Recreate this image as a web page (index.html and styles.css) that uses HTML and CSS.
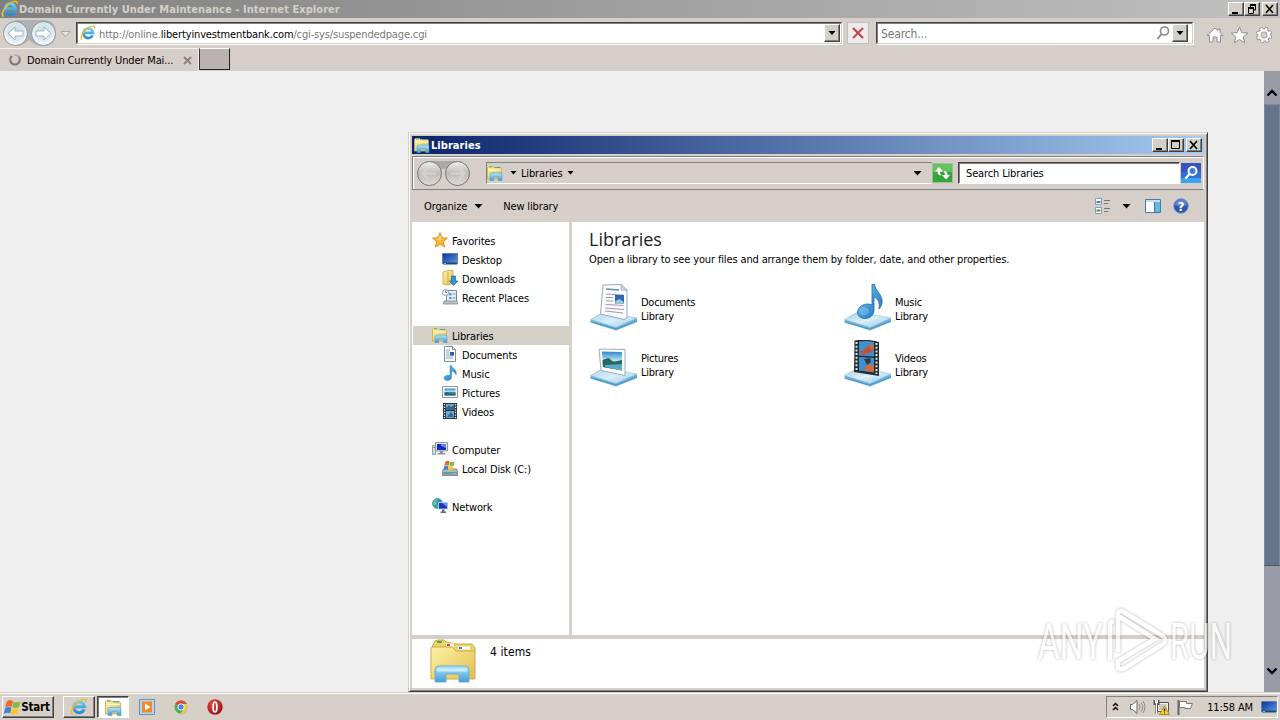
FILE: index.html
```
<!DOCTYPE html>
<html lang="en">
<head>
    <meta charset="UTF-8">
    <meta name="viewport" content="width=device-width, initial-scale=1.0">
    <title>Domain Currently Under Maintenance</title>
    <link rel="stylesheet" href="styles.css">
</head>
<body>

    <!-- shared icons -->
    <svg class="defs">
        <defs>
            <linearGradient id="gFolder" x1="0" y1="0" x2="1" y2="1"><stop offset="0" stop-color="#fdf3a8"/><stop offset="1" stop-color="#e3bd4f"/></linearGradient>
            <linearGradient id="gBlue" x1="0" y1="0" x2="0" y2="1"><stop offset="0" stop-color="#b5e5fb"/><stop offset="1" stop-color="#3d9bd6"/></linearGradient>
            <linearGradient id="gNote" x1="0" y1="0" x2="1" y2="1"><stop offset="0" stop-color="#7cc6f2"/><stop offset="1" stop-color="#1673bd"/></linearGradient>
            <linearGradient id="gScreen" x1="0" y1="0" x2="1" y2="1"><stop offset="0" stop-color="#0a2f94"/><stop offset="1" stop-color="#5b9be6"/></linearGradient>
            <linearGradient id="gPhoto" x1="0" y1="0" x2="0" y2="1"><stop offset="0" stop-color="#2d86cf"/><stop offset=".5" stop-color="#c3e7f2"/><stop offset=".55" stop-color="#4d8b6e"/><stop offset="1" stop-color="#2d7e9b"/></linearGradient>
            <linearGradient id="gPlate" x1="0" y1="0" x2="1" y2="1"><stop offset="0" stop-color="#a9d2e8"/><stop offset=".5" stop-color="#d9eef8"/><stop offset="1" stop-color="#9ccbe5"/></linearGradient>
            <linearGradient id="gIe" x1="0" y1="0" x2="0" y2="1"><stop offset="0" stop-color="#6ccdf5"/><stop offset="1" stop-color="#2b8bd0"/></linearGradient>
            <radialGradient id="gNavBlue" cx=".5" cy=".4" r=".6"><stop offset="0" stop-color="#c9dbe6"/><stop offset=".6" stop-color="#dce7ee"/><stop offset="1" stop-color="#fff"/></radialGradient>
            <linearGradient id="gNavGray" x1="0" y1="0" x2="0" y2="1"><stop offset="0" stop-color="#efefed"/><stop offset=".5" stop-color="#bcbbb8"/><stop offset="1" stop-color="#deddda"/></linearGradient>
            <radialGradient id="gOpera" cx=".4" cy=".3" r=".8"><stop offset="0" stop-color="#ec5048"/><stop offset="1" stop-color="#8f060c"/></radialGradient>
        </defs>

        <symbol id="ie" viewBox="0 0 16 16">
            <path d="M12.6 10.2A4.8 4.8 0 1 1 13 7.8H4.5" fill="none" stroke="url(#gIe)" stroke-width="2.7"/>
            <path d="M2.3 14.7C-.7 13.3 2.5 6.5 8 3c4-2.5 7.3-2.5 6.4.7" fill="none" stroke="#e9bd23" stroke-width="1.3"/>
        </symbol>
        <symbol id="lib" viewBox="0 0 16 16">
            <path d="M.5 14V2.5l1-1h4l1 1h7l1 1V14z" fill="url(#gFolder)" stroke="#cda84b" stroke-width=".8"/>
            <path d="M8 2.5h5" stroke="#4c9fb8"/><path d="M2 2h3" stroke="#62b254"/>
            <path d="M1 5h13" stroke="#fffbd5"/>
            <path d="M3 15.5V9.500q0-1.500 1.500-1.500h8.500q2 0 2 1.500v6h-3.500V12H6.500v3.500z" fill="url(#gBlue)" stroke="#4a9cd0" stroke-width=".6"/>
        </symbol>
        <symbol id="star" viewBox="0 0 16 16">
            <path d="M8 .8l2 5 5.400.400-4.100 3.500 1.400 5.300L8 12.100 3.300 15l1.400-5.300L.6 6.200 6 5.800z" fill="#fdb731" stroke="#d58519" stroke-width=".9"/>
            <path d="M8 3l1.300 3.500L8 9 4 7l2.700-.3z" fill="#ffe287"/>
        </symbol>
        <symbol id="desktop" viewBox="0 0 16 16">
            <path d="M.5 2.500h15v10H.5z" fill="url(#gScreen)" stroke="#5f82ad"/>
            <path d="M1 12.500h14" stroke="#23477d" stroke-width="2"/><path d="M2 12.500h2" stroke="#7ec1ef"/>
        </symbol>
        <symbol id="downloads" viewBox="0 0 16 16">
            <path d="M1 2l5-1.500h5v13L6 15l-5-1z" fill="url(#gFolder)" stroke="#cba343" stroke-width=".8"/>
            <path d="M6 2v13" stroke="#d8b44e"/>
            <path d="M9.500 6h4v5H16l-4.500 4.500L7.500 11h2z" fill="#3394dc" stroke="#1764a6" stroke-width=".7"/>
        </symbol>
        <symbol id="recent" viewBox="0 0 16 16">
            <path d="M4.500 1.500h10v11h-10z" fill="#e4effa" stroke="#6f87a2"/>
            <path d="M7 4h2.500v2.500H7zM7 8h2.500v2H7z" fill="#6c91bf"/><path d="M10.500 5h3M10.500 9h3" stroke="#6c91bf"/>
            <path d="M2 12h13l.5 3H1.500z" fill="#bcc3c9" stroke="#7d868d" stroke-width=".8"/>
            <circle cx="3.500" cy="3.500" r="3" fill="#fff" stroke="#8c949b"/><path d="M3.500 1.500v2h1.500" fill="none" stroke="#555" stroke-width=".8"/>
        </symbol>
        <symbol id="doc" viewBox="0 0 16 16">
            <path d="M2.500.5h8l3 3v12h-11z" fill="#fdfeff" stroke="#7c8c9c"/>
            <path d="M10.500.5v3h3" fill="#d5e0ea" stroke="#7c8c9c"/>
            <path d="M4 4h4M4 6h3M4 8h3M4 10h7M4 12h7" stroke="#8fa5bb"/><path d="M8 6h4v3.500H8z" fill="#275fa5"/>
        </symbol>
        <symbol id="music" viewBox="0 0 16 16">
            <path d="M8 .5h1.500C10 3.500 15.500 4.500 14 10 13.500 8 12 6.500 9.500 6v6c0 2-1.500 3.500-4 3.500-2.200 0-3.500-1-3.500-2.500C2 10.800 5 9.500 8 10.500z" fill="url(#gNote)" stroke="#2f87c6" stroke-width=".5"/>
        </symbol>
        <symbol id="pic" viewBox="0 0 16 16">
            <path d="M.5 2.500h15v11H.5z" fill="#fff" stroke="#8a979f"/><path d="M2.500 4.500h11v7h-11z" fill="url(#gPhoto)"/>
            <path d="M2.500 8.500q3-1 6 1t5-1v3h-11z" fill="#236e80"/>
        </symbol>
        <symbol id="video" viewBox="0 0 16 16">
            <path d="M1 0h14v16H1z" fill="#27333c"/><path d="M4 1h8v6H4zM4 8h8v7H4z" fill="#64aadb"/>
            <path d="M4 5l3-3 2 2 3-2v5H4zM5 14l4-5 3 5z" fill="#3d6684"/>
            <path d="M2.500 1v14M13.500 1v14" stroke="#e8eef1" stroke-width="1.300" stroke-dasharray="1.300 1.300"/>
        </symbol>
        <symbol id="computer" viewBox="0 0 16 16">
            <path d="M.5 4.500h3v9h-3z" fill="#d9dbd7" stroke="#888e91" stroke-width=".8"/><path d="M1 6.500h2" stroke="#64ae52"/>
            <path d="M3.500 1.500h12v8.500h-12z" fill="#dce4ee" stroke="#8b98ac"/>
            <path d="M5 3h9v6H5z" fill="#1729bc"/><path d="M9 3h5v4L9 5z" fill="#6482ec"/>
            <path d="M8 10h3v2h2.500v1.500h-8V12H8z" fill="#8594a5"/>
        </symbol>
        <symbol id="winflag" viewBox="0 0 16 16">
            <path d="M2.500 2.500q3-2.500 6-.5L7.200 7.500Q4.500 6 1.200 8z" fill="#ee642d"/><path d="M9 2.500q3 1.500 6.700-.5l-1.500 5.500q-3 1.500-6.200.3z" fill="#7ebb42"/>
            <path d="M1 8.700q3-2 6-.5L5.800 13.500Q3 12 0 14z" fill="#3d83d4"/><path d="M7.700 8.500q3 1.200 6.200 0l-1.500 5.500q-3 1.300-6 0z" fill="#f8c72d"/>
        </symbol>
        <symbol id="disk" viewBox="0 0 16 16">
            <path d="M1.500 9h13l1.500 3v3.500H0V12z" fill="#aab8bf" stroke="#67767f" stroke-width=".8"/><path d="M1 12h14v2.500H1z" fill="#6c97a8"/><path d="M11 13.500h3" stroke="#69ea72"/>
            <use href="#winflag" x="1.500" y="0" width="11.500" height="11.500"/>
        </symbol>
        <symbol id="network" viewBox="0 0 16 16">
            <circle cx="5.500" cy="5.500" r="5" fill="#2b96cf" stroke="#277baf" stroke-width=".6"/>
            <path d="M1 5q2-4 5-4L4 4l1 2-3 2zM5 7l3 1-2 2z" fill="#7ac66d"/>
            <path d="M6.500 4.500h9V11h-9z" fill="#1736bf" stroke="#b5c5d7"/><path d="M10 5h5v4z" fill="#6b8eee"/>
            <path d="M10 11.500h2.500v2H14V15H8.500v-1.500H10z" fill="#60718a"/>
        </symbol>
        <symbol id="plate" viewBox="0 0 48 48">
            <path d="M.5 37L13 29.500l34 6V39L26 47.500.5 39.500z" fill="#6bb0d8"/>
            <path d="M.5 36.500L14 29l33 6-21 9.500z" fill="url(#gPlate)" stroke="#8bc0dc" stroke-width=".6"/>
            <path d="M1 39l25 7 21-8" fill="none" stroke="#428fbd" stroke-width=".8"/>
        </symbol>
    </svg>

    <div class="browser">
        <div class="ie-title">
            <svg width="18" height="18"><use href="#ie"/></svg>
            <span class="ie-title-text">Domain Currently Under Maintenance - Internet Explorer</span>
            <div class="win-btns">
                <i><svg width="14" height="12"><path d="M3 9h6v2H3z"/></svg></i>
                <i><svg width="14" height="12"><path d="M5 1h6v2H5zM3 4h6v2H3z"/><path d="M5.500 2v2M10.500 2v5H9M3.500 5v5.500h5V5" fill="none" stroke="#000"/></svg></i>
                <i class="close"><svg width="14" height="12"><path d="M3 2l7 8M10 2l-7 8" stroke="#000" stroke-width="1.600"/></svg></i>
            </div>
        </div>

        <div class="ie-nav">
            <svg class="ie-arrows" width="74" height="30" viewBox="0 0 74 30">
                <path d="M15 2h28q13 0 13 13T43 28q-8 0-14-6-6 6-14 6z" fill="#b3b2b2"/>
                <circle cx="15.500" cy="15.500" r="12" fill="url(#gNavBlue)" stroke="#8795a0"/>
                <circle cx="43.500" cy="15.500" r="12" fill="url(#gNavBlue)" stroke="#8795a0"/>
                <path d="M8 15.500l7-6.500v4h8v5h-8v4zM51 15.500L44 9v4h-8v5h8v4z" fill="#fff" stroke="#a3b5c2"/>
                <path d="M61 13.500h9l-4.500 5z" fill="#e8e5e0" stroke="#aaa7a2"/>
            </svg>
            <div class="field address">
                <svg width="16" height="16"><use href="#ie"/></svg>
                <span class="url">http://online.<b>libertyinvestmentbank.com</b>/cgi-sys/suspendedpage.cgi</span>
                <i class="drop"><svg width="12" height="14"><path d="M2.500 5h7L6 9z"/></svg></i>
            </div>
            <div class="stop"><svg width="20" height="20"><path d="M5 5l10 10" stroke="#ca3c46" stroke-width="2.200"/><path d="M15 5L5 15" stroke="#b64f53" stroke-width="2"/></svg></div>
            <div class="field search">
                <span class="hint">Search...</span>
                <svg width="14" height="16"><circle cx="8.500" cy="6" r="4" fill="none" stroke="#8a8a8a" stroke-width="1.600"/><path d="M5.500 9L1.500 14" stroke="#8a8a8a" stroke-width="2"/></svg>
                <i class="drop"><svg width="12" height="14"><path d="M2.500 5h7L6 9z"/></svg></i>
            </div>
            <svg class="ie-tools" width="68" height="18" viewBox="0 0 68 18">
                <g fill="#fff" stroke="#8f8d89" stroke-width="1">
                    <path d="M1 9.500L9 2l3 2.500V3h2v3.500L17 9.500h-2.500V16H11v-5H7v5H3.500V9.500z"/>
                    <path d="M33.500 1l2.300 5.700 6 .4-4.600 3.800 1.500 5.800-5.200-3.200-5.200 3.200 1.500-5.800-4.600-3.800 6-.4z"/>
                </g>
                <g fill="none"><circle cx="58" cy="9" r="6.300" stroke="#8f8d89" stroke-width="3.800" stroke-dasharray="3 1.950"/><circle cx="58" cy="9" r="4.700" stroke="#8f8d89" stroke-width="4"/><circle cx="58" cy="9" r="6.300" stroke="#fff" stroke-width="2.200" stroke-dasharray="2.200 2.750" stroke-dashoffset="-.4"/><circle cx="58" cy="9" r="4.600" stroke="#fff" stroke-width="2.400"/></g>
            </svg>
        </div>

        <div class="ie-tabs">
            <div class="tab">
                <svg width="12" height="12"><path d="M3 2a4.800 4.800 0 1 0 6 0" fill="none" stroke="#777" stroke-width="2"/><path d="M5 1.200A4.800 4.800 0 0 1 10 3.500" fill="none" stroke="#b5b0ab" stroke-width="1.500"/></svg>
                <span>Domain Currently Under Mai...</span>
                <svg class="tab-x" width="9" height="9"><path d="M1 1l7 7M8 1L1 8" stroke="#8a8682" stroke-width="2"/></svg>
            </div>
            <div class="new-tab"></div>
        </div>

        <div class="page">
            <div class="scrollbar">
                <svg class="sb-arrow" width="16" height="33"><path d="M3.500 24.500L8 20l4.500 4.500" fill="none" stroke="#000" stroke-width="2.300"/></svg>
                <div class="thumb"></div>
                <svg class="sb-arrow" width="16" height="33"><path d="M3.500 9.500L8 14l4.500-4.500" fill="none" stroke="#000" stroke-width="2.300"/></svg>
            </div>
        </div>
    </div>

    <div class="explorer">
        <div class="ex-title">
            <svg width="16" height="16"><use href="#lib"/></svg>
            <span>Libraries</span>
            <div class="win-btns">
                <i><svg width="14" height="12"><path d="M3 9h6v2H3z"/></svg></i>
                <i><svg width="14" height="12"><path d="M2.500 1.500h8v8h-8z" fill="none" stroke="#000"/><path d="M2 1h9v2H2z"/></svg></i>
                <i class="close"><svg width="14" height="12"><path d="M3 2l7 8M10 2l-7 8" stroke="#000" stroke-width="1.600"/></svg></i>
            </div>
        </div>

        <div class="ex-nav">
            <svg class="ex-arrows" width="60" height="30" viewBox="0 0 60 30">
                <path d="M16 3h28v5q-14 6-28 0z" fill="#aaa9a6"/>
                <circle cx="16.500" cy="15.500" r="12" fill="url(#gNavGray)" stroke="#777674"/>
                <circle cx="44.500" cy="15.500" r="12" fill="url(#gNavGray)" stroke="#777674"/>
                <path d="M10 15.500h13M15 10l-5.500 5.500L15 21M38 15.500h13M46 10l5.500 5.500L46 21" fill="none" stroke="#d3d2cf" stroke-width="2.500"/>
            </svg>
            <div class="crumbs">
                <svg width="16" height="16"><use href="#lib"/></svg>
                <svg width="7" height="4"><path d="M.5 0h6L3.500 3.500z"/></svg>
                <span>Libraries</span>
                <svg width="7" height="4"><path d="M.5 0h6L3.500 3.500z"/></svg>
                <svg class="crumb-drop" width="9" height="5"><path d="M.5 0h8l-4 4.500z"/></svg>
            </div>
            <svg class="refresh" width="21" height="20"><path d="M.5.500h20v19H.5z" fill="#36a63b" stroke="#9cbf98"/><path d="M1 1h19v8H1z" fill="#64c25f"/><path d="M7 4L3 8.500h2.500q0 4 4 4Q8 11 8 8.500h3zM14 16.500L18 12h-2.500q0-4-4-4 1.500 1.500 1.500 4h-3z" fill="#fff"/></svg>
            <div class="ex-search">Search Libraries</div>
            <svg class="go" width="20" height="20"><path d="M0 0h20v20H0z" fill="#2c6fd9"/><path d="M0 0h20v9H0z" fill="#3555bd"/><path d="M0 15h20v5H0z" fill="#3aa4ee"/><circle cx="11.500" cy="8" r="4" fill="#3f7ddc" stroke="#fff" stroke-width="2"/><path d="M8.500 11l-4 4.500" stroke="#fff" stroke-width="2.400"/></svg>
        </div>

        <div class="ex-tools">
            <span class="organize">Organize</span>
            <svg width="9" height="5"><path d="M.5 0h8l-4 4.500z"/></svg>
            <span class="new-lib">New library</span>
            <svg class="view" width="17" height="16"><path d="M1.500.500h6v6h-6zM1.500 9.500h6v6h-6z" fill="#fff" stroke="#8b9cae"/><path d="M2.500 3h4v2h-4z" fill="#397fc1"/><path d="M2.500 11.500h4v2h-4z" fill="#5b9354"/><path d="M10 2.500h6M10 5.500h4M10 10.500h6M10 13.500h4" stroke="#71767b"/></svg>
            <svg class="view-drop" width="9" height="5"><path d="M.5 0h8l-4 4.500z"/></svg>
            <svg class="preview" width="16" height="14"><path d="M.5.500h15v13H.5z" fill="#fff" stroke="#437da9"/><path d="M1 1h14v2H1z" fill="#c7dfed"/><path d="M10 3h5v10h-5z" fill="#65b9df"/><path d="M9.500 3v10" stroke="#387aaa"/></svg>
            <svg class="help" width="16" height="16"><circle cx="8" cy="8" r="7.300" fill="#2856b4" stroke="#8496b8"/><path d="M2 7a6 6 0 0 1 12 0q-6 3-12 0z" fill="#5c83d0"/><text x="8" y="12.500" text-anchor="middle">?</text></svg>
        </div>

        <div class="ex-body">
            <ul class="tree">
                <li class="root"><svg width="16" height="16"><use href="#star"/></svg><span>Favorites</span></li>
                <li><svg width="16" height="16"><use href="#desktop"/></svg><span>Desktop</span></li>
                <li><svg width="16" height="16"><use href="#downloads"/></svg><span>Downloads</span></li>
                <li><svg width="16" height="16"><use href="#recent"/></svg><span>Recent Places</span></li>
                <li class="root group selected"><svg width="16" height="16"><use href="#lib"/></svg><span>Libraries</span></li>
                <li><svg width="16" height="16"><use href="#doc"/></svg><span>Documents</span></li>
                <li><svg width="16" height="16"><use href="#music"/></svg><span>Music</span></li>
                <li><svg width="16" height="16"><use href="#pic"/></svg><span>Pictures</span></li>
                <li><svg width="16" height="16"><use href="#video"/></svg><span>Videos</span></li>
                <li class="root group"><svg width="16" height="16"><use href="#computer"/></svg><span>Computer</span></li>
                <li><svg width="16" height="16"><use href="#disk"/></svg><span>Local Disk (C:)</span></li>
                <li class="root group"><svg width="16" height="16"><use href="#network"/></svg><span>Network</span></li>
            </ul>

            <div class="content">
                <h1>Libraries</h1>
                <p>Open a library to see your files and arrange them by folder, date, and other properties.</p>
                <div class="libs">
                    <div class="lib">
                        <svg width="50" height="48" viewBox="-1 1 50 48"><use href="#plate" width="48" height="48"/><path d="M13 2l18-.500 6 5.500v28l-3 1.500L10.500 31z" fill="#f9fbfd" stroke="#98abc0"/><path d="M31 1.500V7l6 .500z" fill="#cbd8e5" stroke="#98abc0" stroke-width=".7"/><path d="M16 6l13 1" stroke="#678faf" stroke-width="1.500"/><path d="M16 11l17 1M16 14.500h7M16 18h7M15.500 21.500l18 1M15 25l19 1.500M15 28l18 2" stroke="#a994b4"/><path d="M25 12h9v8.500h-9z" fill="#2b68ae"/><path d="M25.500 18l4-2 4 3v1.500h-8z" fill="#9ccbe0"/></svg>
                        <div>Documents<br>Library</div>
                    </div>
                    <div class="lib">
                        <svg width="50" height="48" viewBox="-1 1 50 48"><use href="#plate" width="48" height="48"/><path d="M28 1h2.500c.5 7 9 11 7.500 19-.5 3-2 5-3 6 1-7-1-10-5-12v13c0 5-4 8.500-9 8.500-4.500 0-7.500-2.500-7.500-6 0-5 5-9 11.500-8.500l3 1z" fill="url(#gNote)" stroke="#246ba5" stroke-width=".8"/><ellipse cx="20" cy="28" rx="5" ry="4" fill="#79c3f0" opacity=".6"/></svg>
                        <div>Music<br>Library</div>
                    </div>
                    <div class="lib">
                        <svg width="50" height="48" viewBox="-1 1 50 48"><use href="#plate" width="48" height="48"/><path d="M9 10l26 .500v26L11 31.500z" fill="#fff" stroke="#9cadb9"/><path d="M12 12.500l20 .500v18.500L13 28z" fill="url(#gPhoto)"/><path d="M12.500 21l6-2 5 4 8.500-2v10L13 28z" fill="#24695f"/><path d="M15 26l17-1v6.500L15 28z" fill="#5da9c6"/></svg>
                        <div>Pictures<br>Library</div>
                    </div>
                    <div class="lib">
                        <svg width="50" height="48" viewBox="-1 1 50 48"><use href="#plate" width="48" height="48"/><path d="M10.500 1.500q13-2 24.500 1.500v34l-25-4z" fill="#242c2d"/><path d="M15 2.500q8-1 15 .500v14.500l-15-1zM15 18l15 1v14.500l-15-2z" fill="#3c91d5"/><path d="M15 12h4l4-4 4-2 2 5-4 4-3-1-2 3z" fill="#c64e31"/><path d="M25 6l3-2 2 5-3 2zM21 28q4-5 9-1v6l-9-1.500z" fill="#d66939"/><path d="M20 20l6-1 1 4-4 3z" fill="#333a3f"/><path d="M12.500 3v29M32.500 4v31" stroke="#dbe5e7" stroke-width="2" stroke-dasharray="2 1.700"/></svg>
                        <div>Videos<br>Library</div>
                    </div>
                </div>
            </div>
        </div>

        <div class="ex-details">
            <svg width="46" height="46" viewBox="0 0 46 46">
                <path d="M2 8l3-6 3-1h6l2 2 10 2h16l3 4v5H2z" fill="#eed36b" stroke="#c9a345"/>
                <path d="M7 3h5" stroke="#4ca84c" stroke-width="2"/><path d="M16 6h8" stroke="#fff" stroke-width="3"/><path d="M17 6h3" stroke="#d44e35" stroke-width="2"/><path d="M28 9h12" stroke="#fff" stroke-width="3"/><path d="M29 9h3" stroke="#357bb5" stroke-width="2"/>
                <path d="M1 10q0-2 2-2h19l4 4h17q2 0 2 2v26H1z" fill="url(#gFolder)" stroke="#d0ab4c"/>
                <path d="M5 43V31q0-4 4-4h26q4 0 4 4v12H29v-8H16v8z" fill="url(#gBlue)" stroke="#69afd7"/>
                <path d="M7 29.500h30v3H7z" fill="#dff5fe" opacity=".7"/>
            </svg>
            <span>4 items</span>
        </div>
    </div>

    <div class="taskbar">
        <div class="start"><svg width="17" height="17"><use href="#winflag"/></svg>Start</div>
        <div class="task ie"><svg width="18" height="18"><use href="#ie"/></svg></div>
        <div class="task active"><svg width="17" height="17"><use href="#lib"/></svg></div>
        <div class="pinned">
            <svg width="16" height="16"><path d="M.5.500h15v15H.5z" fill="#b9d4ed" stroke="#5d95c9"/><path d="M3 2.500h10v11H3z" fill="#f48b22"/><path d="M6 4.500v7L11.500 8z" fill="#fff"/></svg>
            <svg width="14" height="14" viewBox="0 0 16 16"><circle cx="8" cy="8" r="7.500" fill="#4ab157"/><path d="M8 8L1.500 4.200A7.500 7.500 0 0 1 14.500 4.500H8z" fill="#df4a3c"/><path d="M8 4.500h6.500A7.500 7.500 0 0 1 8 15.500L11 10z" fill="#f9ca3b"/><circle cx="8" cy="8" r="3.600" fill="#4587e8" stroke="#fff"/></svg>
            <svg width="16" height="16"><circle cx="8" cy="8" r="7.700" fill="url(#gOpera)"/><ellipse cx="8" cy="8" rx="1.900" ry="5" fill="none" stroke="#fff" stroke-width="1.700"/></svg>
        </div>
        <div class="tray">
            <svg width="8" height="10"><path d="M1 4l2.500-2.500L6 4M1 8l2.500-2.500L6 8" fill="none" stroke="#000" stroke-width="1.400"/></svg>
            <svg class="sound" width="17" height="16"><path d="M1.500 5.500h2L8 1.500v13l-4.500-4h-2z" fill="#fff" stroke="#62625f"/><path d="M10 5q2 3 0 6M12 3.500q3.500 4.500 0 9M14 2q4 6 0 12" fill="none" stroke="#8d8b87"/></svg>
            <svg class="net" width="17" height="16"><path d="M4.500 3.500h11v9h-11z" fill="#f2f2ef" stroke="#555"/><path d="M6 5h8v6H6z" fill="#c9c8c3"/><path d="M1.500 1v4h4V1M3.500 5v10" fill="none" stroke="#55534f" stroke-width="2"/><path d="M2.500 1v3h2V1M3.500 4v11" fill="none" stroke="#fff"/><path d="M11.500 7l5 8.500h-10z" fill="#ffd41e" stroke="#9a7b12" stroke-width=".8"/><path d="M11.500 9.500v3M11.500 13.500v1" stroke="#222" stroke-width="1.300"/></svg>
            <svg class="flag" width="17" height="16"><path d="M1.500 1v15" stroke="#666" stroke-width="2"/><path d="M2.500 2.500h7v2h6l-2 5H8v-1H2.500z" fill="#fff" stroke="#777"/></svg>
            <span class="clock">11:58 AM</span>
            <svg width="16" height="16"><use href="#desktop"/></svg>
        </div>
    </div>

    <svg class="watermark" width="210" height="76" viewBox="0 0 210 76">
        <text x="4" y="53" textLength="65" lengthAdjust="spacingAndGlyphs">ANY</text>
        <path d="M76 54V19q0-4 4-3M84 46V8q1-5 6-2l39 24q4 4 0 8L94 60q-7 5-10 2v-7l37-22-37-23"/>
        <text x="136" y="53" textLength="62" lengthAdjust="spacingAndGlyphs">RUN</text>
    </svg>
</body>
</html>
```
FILE: styles.css
```
*{margin: 0;padding: 0;box-sizing: border-box;}

html, body{
    width: 1280px;
    height: 720px;
    overflow: hidden;
}

body{
    display: flex;
    flex-direction: column;
    position: relative;
    background: #efefef;
    font-family: "DejaVu Sans Condensed", "DejaVu Sans", sans-serif;
    font-stretch: condensed;
    font-size: 11px;
    letter-spacing: -0.14px;
    color: #000;
}

svg{
    display: block;
    flex: none;
}

span{
    white-space: nowrap;
}

ul, li{
    list-style: none;
}

.defs{
    position: absolute;
    width: 0;
    height: 0;
}

/* window buttons */
.win-btns{
    display: flex;
    margin-left: auto;
}

.win-btns i{
    width: 16px;
    height: 14px;
    background: #d4d0c8;
    border: 1px solid;
    border-color: #fff #404040 #404040 #fff;
    box-shadow: inset -1px -1px #808080;
}

.win-btns .close{
    margin-left: 2px;
}

/* browser */
.browser{
    height: 692px;
    display: flex;
    flex-direction: column;
}

.ie-title{
    height: 18px;
    display: flex;
    align-items: center;
    background: linear-gradient(90deg, #808080, #c0c0c0);
    color: #d4d0c8;
    padding: 0 2px 0 1px;
}

.ie-title-text{
    font-weight: bold;
    letter-spacing: 0.06px;
}

.ie-nav{
    height: 30px;
    display: flex;
    align-items: center;
    background: linear-gradient(90deg, #d6cec8, #d4d0c8);
}

.field{
    height: 22px;
    display: flex;
    align-items: center;
    background: #fff;
    border: 1px solid;
    border-color: #404040 #d4d0c8 #d4d0c8 #404040;
    box-shadow: inset 1px 1px #808080, 1px 1px #fff;
}

.address{
    width: 766px;
    margin-left: 2px;
    padding-left: 3px;
}

.url{
    margin: 2px 0 0 3px;
    color: #777;
}

.url b{
    font-weight: normal;
    color: #000;
}

.drop{
    width: 16px;
    height: 18px;
    margin: 0 1px 0 auto;
    padding: 1px;
    background: #d4d0c8;
    border: 1px solid;
    border-color: #fff #404040 #404040 #fff;
    box-shadow: inset -1px -1px #808080;
}

.stop{
    width: 22px;
    height: 22px;
    margin-left: 5px;
    background: #eeebec;
    border: 1px solid #c3bec0;
}

.search{
    width: 317px;
    margin-left: 7px;
    padding-left: 4px;
}

.hint{
    margin-top: 1px;
    color: #777;
    font-size: 12px;
}

.search svg{
    margin-left: auto;
}

.search .drop{
    margin: 0 4px 0 2px;
}

.search .drop svg{
    margin: 0;
}

.ie-tools{
    margin-left: 13px;
    margin-top: 3px;
}

.ie-tabs{
    height: 23px;
    display: flex;
    background: #d6cec8;
}

.tab{
    width: 199px;
    display: flex;
    align-items: center;
    padding-left: 9px;
    border-top: 1px solid #f5f2ee;
    border-right: 1px solid #f5f2ee;
}

.tab span{
    margin-left: 6px;
}

.tab-x{
    margin-left: auto;
    margin-right: 6px;
}

.new-tab{
    width: 31px;
    height: 22px;
    background: #bab3af;
    border: 1px solid;
    border-color: #fff #222 #222 #333;
}

.page{
    flex: 1;
    display: flex;
    justify-content: flex-end;
}

.scrollbar{
    width: 16px;
    display: flex;
    flex-direction: column;
    background: #999ca6;
}

.thumb{
    height: 462px;
    background: #66748a;
    border: 1px solid #7c899c;
    border-bottom-color: #465369;
}

.thumb + .sb-arrow{
    margin-top: auto;
}

/* explorer window */
.explorer{
    position: absolute;
    left: 408px;
    top: 132px;
    width: 800px;
    height: 560px;
    padding: 3px;
    display: flex;
    flex-direction: column;
    background: #d6cec8;
    border: 1px solid;
    border-color: #d4d0c8 #404040 #404040 #d4d0c8;
    box-shadow: inset 1px 1px #fff, inset -1px -1px #808080;
}

.ex-title{
    height: 18px;
    flex: none;
    display: flex;
    align-items: center;
    background: linear-gradient(90deg, #0a246a, #a6caf0);
    padding: 0 2px;
    color: #fff;
    font-weight: bold;
    letter-spacing: 0.05px;
}

.ex-title span{
    margin-left: 1px;
}

.ex-nav{
    height: 34px;
    flex: none;
    margin-top: 2px;
    display: flex;
    align-items: center;
    border: 1px solid #808080;
    border-right-color: #fff;
    box-shadow: inset 1px 1px #fff;
}

.crumbs{
    width: 446px;
    height: 22px;
    margin-left: 13px;
    display: flex;
    align-items: center;
    border: 1px solid;
    border-color: #808080 #d4d0c8 #fff #808080;
}

.crumbs svg + svg{
    margin-left: 7px;
}

.crumbs span{
    margin: 0 5px 0 4px;
}

.crumbs .crumb-drop{
    margin-left: auto;
    margin-right: 9px;
}

.ex-search{
    width: 222px;
    height: 22px;
    margin: 0 1px 0 5px;
    padding-left: 7px;
    line-height: 21px;
    background: #fff;
    border: 1px solid;
    border-color: #404040 #fff #fff #404040;
    box-shadow: inset 1px 1px #808080;
}

.ex-tools{
    height: 32px;
    flex: none;
    display: flex;
    align-items: center;
    padding-left: 12px;
}

.organize{
    margin-right: 7px;
}

.new-lib{
    margin-left: 20px;
}

.view{
    margin-left: auto;
}

.view-drop{
    margin-left: 11px;
}

.preview{
    margin-left: 14px;
}

.help{
    margin: 0 15px 0 12px;
}

.help text{
    font: bold 12px "DejaVu Sans", sans-serif;
    fill: #fff;
}

.ex-body{
    height: 413px;
    flex: none;
    display: flex;
    background: #fff;
}

.tree{
    width: 160px;
    padding: 9px 0 0 1px;
    border-right: 3px solid #d6d0c8;
}

.tree li{
    height: 19px;
    display: flex;
    align-items: center;
    padding-left: 29px;
}

.tree li svg{
    margin: 0 4px 1px 0;
}

.tree li span{
    padding-top: 2px;
}

.tree .root{
    padding-left: 19px;
}

.tree .group{
    margin-top: 19px;
}

.tree .selected{
    background: #d4d0c8;
}

.content{
    padding: 5px 0 0 17px;
}

.content h1{
    font: 18px/24px "Open Sans", sans-serif;
    letter-spacing: 0;
    color: #222;
}

.content p{
    height: 29px;
    padding-top: 2px;
    line-height: 14px;
}

.libs{
    display: grid;
    grid-template-columns: 254px 254px;
    grid-auto-rows: 56px;
}

.lib{
    display: flex;
    align-items: center;
    line-height: 14px;
    letter-spacing: -0.25px;
}

.lib svg{
    margin-right: 2px;
}

.lib div{
    margin-top: 4px;
}

.ex-details{
    height: 53px;
    flex: none;
    display: flex;
    padding-left: 18px;
    background: #fff;
    border-top: 4px solid #d6cec8;
}

.ex-details span{
    margin: 6px 0 0 14px;
    font-size: 12px;
    letter-spacing: 0.1px;
}

/* taskbar */
.taskbar{
    height: 28px;
    display: flex;
    align-items: center;
    padding: 1px 2px 0;
    background: #d6d0c8;
    border-top: 1px solid #d4d0c8;
    box-shadow: inset 0 1px #fff;
}

.start, .task{
    height: 22px;
    display: flex;
    align-items: center;
    justify-content: center;
    border: 1px solid;
    border-color: #fff #404040 #404040 #fff;
    box-shadow: inset -1px -1px #808080;
}

.start{
    width: 52px;
    padding-right: 2px;
    font-weight: bold;
    font-size: 11.5px;
    letter-spacing: -0.2px;
}

.task{
    width: 32px;
    margin-left: 2px;
}

.task.ie{
    margin-left: 9px;
}

.task.active{
    background: #fff;
    border-color: #404040 #fff #fff #404040;
    box-shadow: inset 1px 1px #808080;
}

.pinned{
    display: flex;
    align-items: center;
    gap: 19px;
    margin-left: 10px;
}

.tray{
    width: 172px;
    height: 22px;
    margin-left: auto;
    padding-left: 5px;
    display: flex;
    align-items: center;
    border: 1px solid;
    border-color: #808080 #fff #fff #808080;
}

.sound{
    margin-left: 9px;
}

.net{
    margin-left: 7px;
}

.flag{
    margin-left: 7px;
}

.clock{
    margin-left: auto;
    margin-right: 8px;
}

/* watermark */
.watermark{
    position: absolute;
    left: 1034px;
    top: 606px;
    overflow: visible;
    filter: drop-shadow(0 0 1.5px rgba(0, 0, 0, .45));
    opacity: .65;
}

.watermark text{
    font: 50px "Roboto", sans-serif;
    letter-spacing: 0;
    fill: #fff;
}

.watermark path{
    fill: none;
    stroke: #fff;
    stroke-width: 4.5;
}
```
